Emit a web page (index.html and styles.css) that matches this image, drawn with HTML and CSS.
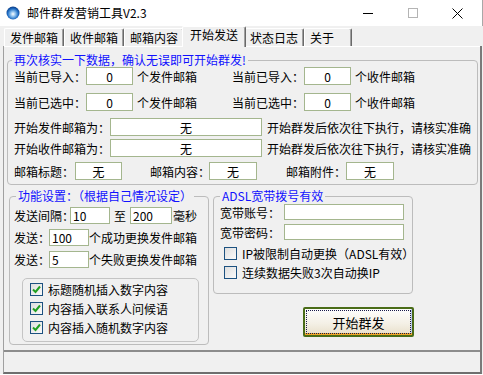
FILE: index.html
```html
<!DOCTYPE html>
<html lang="zh-CN">
<head>
    <meta charset="UTF-8">
    <title>邮件群发营销工具V2.3</title>
    <link rel="stylesheet" href="styles.css">
</head>
<body>

    <div class="window">
        <div class="titlebar">
            <svg class="app-icon" width="14" height="14" viewBox="0 0 14 14">
                <defs>
                    <radialGradient id="ball" cx="50%" cy="58%" r="55%">
                        <stop offset="0" stop-color="#ffffff"/>
                        <stop offset="0.35" stop-color="#8cc0ee"/>
                        <stop offset="0.75" stop-color="#1d6bc2"/>
                        <stop offset="1" stop-color="#0c3f8a"/>
                    </radialGradient>
                </defs>
                <circle cx="7" cy="7" r="6.5" fill="url(#ball)"/>
            </svg>
            <span class="title">邮件群发营销工具V2.3</span>
            <div class="controls">
                <div class="ctl">
                    <svg width="10" height="10" viewBox="0 0 10 10"><path d="M0 5.5H10" stroke="#000" stroke-width="1"/></svg>
                </div>
                <div class="ctl">
                    <svg width="10" height="10" viewBox="0 0 10 10"><rect x="0.5" y="0.5" width="9" height="9" fill="none" stroke="#b4b4b4"/></svg>
                </div>
                <div class="ctl">
                    <svg width="11" height="11" viewBox="0 0 11 11"><path d="M0.5 0.5L10.5 10.5M10.5 0.5L0.5 10.5" stroke="#000" stroke-width="1"/></svg>
                </div>
            </div>
        </div>

        <div class="tabbar">
            <div class="tab">发件邮箱</div>
            <div class="tab">收件邮箱</div>
            <div class="tab">邮箱内容</div>
            <div class="tab active">开始发送</div>
            <div class="tab">状态日志</div>
            <div class="tab short">关于</div>
        </div>

        <div class="main">
            <div class="page">

                <!-- 核对数据 -->
                <fieldset class="group check-group">
                    <legend>再次核实一下数据，确认无误即可开始群发!</legend>
                    <div class="row">
                        <div class="half">
                            <span class="lbl w72">当前已导入：</span>
                            <input class="box w47 center" type="text" value="0">
                            <span class="unit">个发件邮箱</span>
                        </div>
                        <div class="half">
                            <span class="lbl w72">当前已导入：</span>
                            <input class="box w47 center" type="text" value="0">
                            <span class="unit">个收件邮箱</span>
                        </div>
                    </div>
                    <div class="row mt8">
                        <div class="half">
                            <span class="lbl w72">当前已选中：</span>
                            <input class="box w47 center" type="text" value="0">
                            <span class="unit">个发件邮箱</span>
                        </div>
                        <div class="half">
                            <span class="lbl w72">当前已选中：</span>
                            <input class="box w47 center" type="text" value="0">
                            <span class="unit">个收件邮箱</span>
                        </div>
                    </div>
                    <div class="row mt7">
                        <span class="lbl w96">开始发件邮箱为：</span>
                        <input class="box w152 center" type="text" value="无">
                        <span class="note">开始群发后依次往下执行，请核实准确</span>
                    </div>
                    <div class="row mt3">
                        <span class="lbl w96">开始收件邮箱为：</span>
                        <input class="box w152 center" type="text" value="无">
                        <span class="note">开始群发后依次往下执行，请核实准确</span>
                    </div>
                    <div class="row mt5">
                        <span class="lbl w61">邮箱标题：</span>
                        <input class="box w47 center" type="text" value="无">
                        <span class="lbl w59 ml28">邮箱内容：</span>
                        <input class="box w48 center" type="text" value="无">
                        <span class="lbl w60 ml29">邮箱附件：</span>
                        <input class="box w48 center" type="text" value="无">
                    </div>
                </fieldset>

                <div class="lower">
                    <!-- 功能设置 -->
                    <fieldset class="group func-group">
                        <legend>功能设置：（根据自己情况设定）</legend>
                        <div class="row small">
                            <span class="lbl w56">发送间隔：</span>
                            <input class="box small w40" type="text" value="10">
                            <span class="to">至</span>
                            <input class="box small w42" type="text" value="200">
                            <span class="unit-ms">毫秒</span>
                        </div>
                        <div class="row small mt5">
                            <span class="lbl w35">发送：</span>
                            <input class="box small w40" type="text" value="100">
                            <span>个成功更换发件邮箱</span>
                        </div>
                        <div class="row small mt5">
                            <span class="lbl w35">发送：</span>
                            <input class="box small w40" type="text" value="5">
                            <span>个失败更换发件邮箱</span>
                        </div>
                        <div class="options">
                            <div class="check">
                                <span class="cb"><svg width="11" height="11" viewBox="0 0 11 11"><path d="M2 5.5L4.5 8L9 2.5" fill="none" stroke="#22a022" stroke-width="2"/></svg></span>
                                <span>标题随机插入数字内容</span>
                            </div>
                            <div class="check">
                                <span class="cb"><svg width="11" height="11" viewBox="0 0 11 11"><path d="M2 5.5L4.5 8L9 2.5" fill="none" stroke="#22a022" stroke-width="2"/></svg></span>
                                <span>内容插入联系人问候语</span>
                            </div>
                            <div class="check">
                                <span class="cb"><svg width="11" height="11" viewBox="0 0 11 11"><path d="M2 5.5L4.5 8L9 2.5" fill="none" stroke="#22a022" stroke-width="2"/></svg></span>
                                <span>内容插入随机数字内容</span>
                            </div>
                        </div>
                    </fieldset>

                    <div class="side">
                        <!-- ADSL -->
                        <fieldset class="group adsl-group">
                            <legend>ADSL宽带拨号有效</legend>
                            <div class="row tiny">
                                <span class="lbl w64">宽带账号：</span>
                                <input class="box tiny w120" type="text" value="">
                            </div>
                            <div class="row tiny mt4">
                                <span class="lbl w64">宽带密码：</span>
                                <input class="box tiny w120" type="text" value="">
                            </div>
                            <div class="check adsl-check mt4">
                                <span class="cb"></span>
                                <span>IP被限制自动更换（ADSL有效）</span>
                            </div>
                            <div class="check adsl-check">
                                <span class="cb"></span>
                                <span>连续数据失败3次自动换IP</span>
                            </div>
                        </fieldset>

                        <button class="start-btn">开始群发</button>
                    </div>
                </div>

            </div>
            <div class="statusbar"></div>
        </div>
    </div>

</body>
</html>
```

FILE: styles.css
```css
body {
    margin: 0;
    padding: 0;
    background: #fff;
    font-family: "Noto Sans CJK SC", "Noto Sans", sans-serif;
    font-size: 12px;
    color: #000;
}

.window {
    width: 483px;
    height: 374px;
    background: #f0f0f0;
    overflow: hidden;
}

/* title bar */
.titlebar {
    height: 26px;
    background: #fff;
    display: flex;
    align-items: center;
    box-sizing: border-box;
    border-right: 1px solid #a8a8a8;
}

.app-icon {
    margin-left: 6px;
}

.title {
    margin-left: 7px;
    line-height: 14px;
}

.controls {
    margin-left: auto;
    margin-right: 2px;
    display: flex;
    height: 26px;
}

.ctl {
    width: 45px;
    display: flex;
    align-items: center;
    justify-content: center;
}

/* tabs */
.tabbar {
    height: 20px;
    display: flex;
    align-items: flex-end;
    padding-left: 4px;
}

.tab {
    width: 60px;
    height: 18px;
    box-sizing: border-box;
    padding-left: 5px;
    line-height: 17px;
    white-space: nowrap;
    background: #f0f0f0;
    border-top: 1px solid #fff;
    border-left: 1px solid #fff;
    border-right: 1px solid #696969;
    box-shadow: inset -1px 0 0 #a0a0a0;
    border-radius: 2px 2px 0 0;
}

.tab.short {
    width: 48px;
}

.tab.active {
    width: 64px;
    height: 21px;
    margin: 0 -2px -1px;
    padding-left: 7px;
    line-height: 16px;
    position: relative;
    z-index: 1;
}

/* main frame */
.main {
    margin-left: 3px;
    width: 479px;
    box-sizing: border-box;
    border-left: 1px solid #a0a0a0;
    border-right: 2px solid #7a7a7a;
    border-bottom: 2px solid #6e6e6e;
}

.page {
    height: 306px;
    box-sizing: border-box;
    border-top: 1px solid #fff;
    border-bottom: 2px solid #8c8c8c;
    overflow: hidden;
}

.statusbar {
    height: 20px;
    background: #f0f0f0;
}

/* group boxes */
.group {
    margin: 0;
    padding: 0 6px;
    min-width: 0;
    box-sizing: border-box;
    border: 1px solid #bcbcbc;
    border-radius: 4px;
}

.group legend {
    padding: 0 2px;
    line-height: 14px;
    color: #1010ff;
    white-space: nowrap;
}

.check-group {
    margin: 6px 0 0 3px;
    width: 471px;
    padding-bottom: 4px;
}

.check-group legend {
    margin-left: -2px;
}

.func-group {
    margin-left: 5px;
    width: 200px;
    padding: 4px 4px 2px;
}

.func-group legend {
    margin-left: 2px;
}

.adsl-group {
    width: 200px;
    padding: 1px 6px 11px;
}

.lower {
    display: flex;
    margin-top: 4px;
}

.side {
    margin-left: 4px;
    width: 210px;
}

/* rows */
.row {
    display: flex;
    align-items: center;
    height: 18px;
    white-space: nowrap;
}

.row.small {
    height: 17px;
}

.row.tiny {
    height: 16px;
}

.half {
    width: 218px;
    display: flex;
    align-items: center;
}

.lbl {
    flex: none;
    white-space: nowrap;
    overflow: visible;
}

.unit {
    margin-left: 4px;
}

.note {
    margin-left: 5px;
}

.to {
    width: 20px;
    text-align: center;
}

.unit-ms {
    margin-left: 1px;
}

.mt3 { margin-top: 3px; }
.mt4 { margin-top: 4px; }
.mt5 { margin-top: 5px; }
.mt7 { margin-top: 7px; }
.mt8 { margin-top: 8px; }
.ml28 { margin-left: 28px; }
.ml29 { margin-left: 29px; }

.w35 { width: 35px; }
.w40 { width: 40px; }
.w42 { width: 42px; }
.w47 { width: 47px; }
.w48 { width: 48px; }
.w56 { width: 56px; }
.w59 { width: 59px; }
.w60 { width: 60px; }
.w61 { width: 61px; }
.w64 { width: 64px; }
.w72 { width: 72px; }
.w96 { width: 96px; }
.w120 { width: 120px; }
.w152 { width: 152px; }

/* text boxes */
.box {
    flex: none;
    box-sizing: border-box;
    height: 18px;
    margin: 0;
    padding: 0 2px;
    border: 1px solid #a4b68e;
    background: #fff;
    font: inherit;
    line-height: 16px;
    color: #000;
    outline: none;
}

.box.small {
    height: 17px;
    line-height: 15px;
}

.box.tiny {
    height: 16px;
    line-height: 14px;
}

.box.center {
    text-align: center;
}

/* check boxes */
.options {
    margin: 10px 0 0 8px;
    width: 177px;
    height: 64px;
    box-sizing: border-box;
    padding: 1px 0 4px 7px;
    border: 1px solid #c4c4c4;
    border-radius: 5px;
}

.check {
    display: flex;
    align-items: center;
    gap: 5px;
    height: 19px;
    white-space: nowrap;
}

.adsl-check {
    margin-left: 4px;
}

.cb {
    flex: none;
    width: 13px;
    height: 13px;
    box-sizing: border-box;
    border: 1px solid #1c5180;
    background: linear-gradient(135deg, #dedede, #fafafa);
    display: flex;
    align-items: center;
    justify-content: center;
}

/* start button */
.start-btn {
    display: block;
    margin: 13px 0 0 90px;
    width: 111px;
    height: 30px;
    padding: 0;
    font-family: "Noto Sans CJK SC", sans-serif;
    font-size: 13px;
    color: #000;
    border: 2px solid #4a6c18;
    border-radius: 2px;
    background: linear-gradient(#fefefd, #f4f0e6 55%, #e8dfca);
    box-shadow: inset 0 -2px 0 #f2a82a, inset -1px 0 0 #b9c8ee;
    outline: 1px dotted #1a1a4a;
    outline-offset: -4px;
    cursor: pointer;
}
```
